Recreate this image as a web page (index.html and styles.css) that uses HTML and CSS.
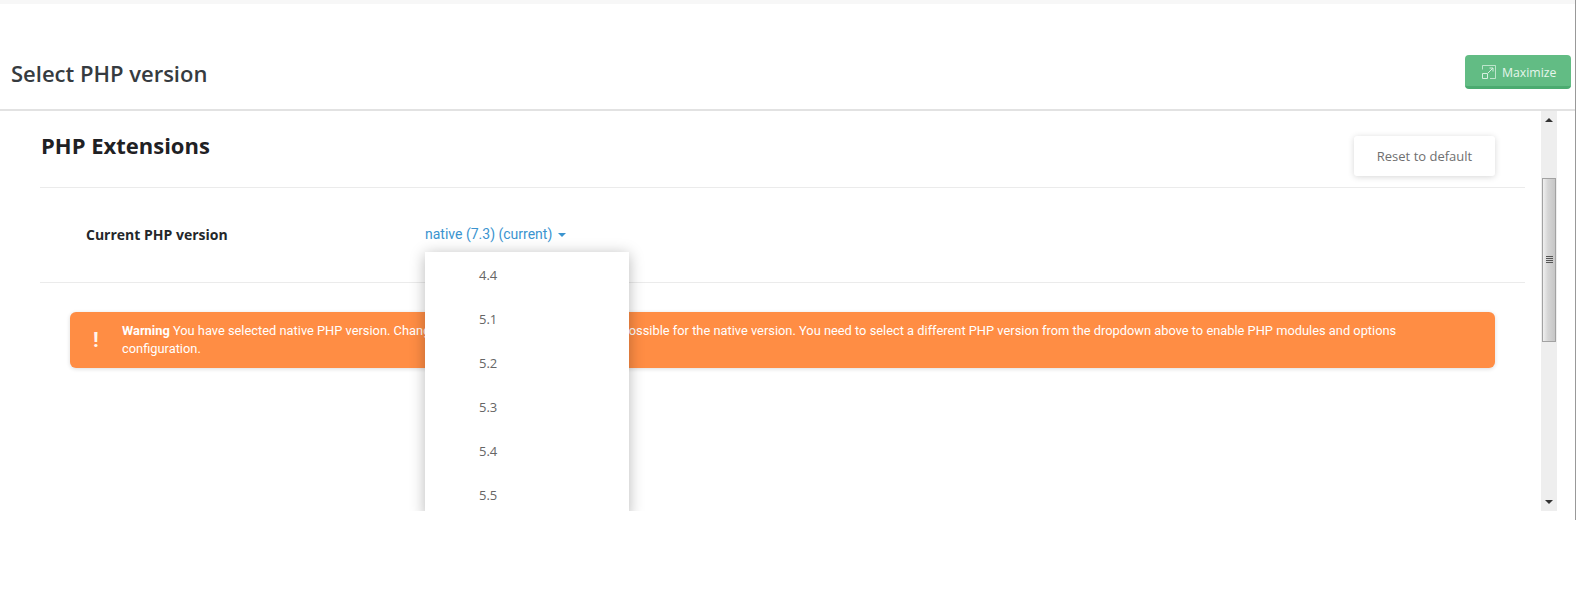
FILE: index.html
```html
<!DOCTYPE html>
<html lang="en">
<head>
<meta charset="utf-8">
<title>Select PHP version</title>
<link rel="stylesheet" href="styles.css">
</head>
<body>
<div class="window">
  <div class="topbar"></div>
  <header class="head">
    <h1 class="title">Select PHP version</h1>
    <button class="maximize" type="button">
      <svg class="max-icon" width="14" height="14" viewBox="0 0 14 14" fill="none" stroke="#d5efdf" stroke-width="1">
        <path d="M.5 4.500V.5H13.500V13.500H8" opacity=".8"/>
        <path d="M.5 8.500H5.500V13.500H.5Z"/>
        <path d="M6 8L11 3M7.500 3H11V6.500"/>
      </svg>
      <span>Maximize</span>
    </button>
  </header>
  <div class="body">
    <main class="pane">
      <div class="section-head">
        <h2 class="section-title">PHP Extensions</h2>
        <button class="reset" type="button">Reset to default</button>
      </div>
      <div class="version-row">
        <span class="version-label">Current PHP version</span>
        <span class="version-link">native (7.3) (current)<i class="caret"></i></span>
      </div>
      <div class="alert">
        <span class="alert-mark">!</span>
        <p class="alert-text"><b>Warning</b> You have selected native PHP version. Changing extensions and options is not possible for the native version. You need to select a different PHP version from the dropdown above to enable PHP modules and options configuration.</p>
      </div>
      <ul class="menu">
        <li>4.4</li>
        <li>5.1</li>
        <li>5.2</li>
        <li>5.3</li>
        <li>5.4</li>
        <li>5.5</li>
      </ul>
    </main>
    <div class="scrollbar">
      <i class="arrow-up"></i>
      <div class="thumb"><span class="grip"></span></div>
      <i class="arrow-down"></i>
    </div>
  </div>
</div>
</body>
</html>
```
FILE: styles.css
```css
html, body { margin: 0; padding: 0; background: #fff; }
body { height: 591px; overflow: hidden; font-family: "Open Sans", sans-serif; }
.window { width: 1575px; height: 520px; border-right: 1px solid #999; display: flex; flex-direction: column; }
.topbar { height: 4px; flex: none; background: #f7f7f7; }
.head { height: 107px; flex: none; box-sizing: border-box; border-bottom: 2px solid #e2e2e2; padding: 51px 4px 0 11px; display: flex; justify-content: space-between; align-items: flex-start; }
.title { margin: 2px 0 0; font-size: 22px; line-height: 32px; font-weight: 600; color: #363b40; }
.maximize { width: 106px; height: 34px; box-sizing: border-box; border: 0; border-bottom: 3px solid #4bab70; border-radius: 4px; background: #62bc84; color: #e6f6ec; font: 400 12.250px "Open Sans", sans-serif; display: flex; align-items: center; gap: 6px; padding: 3px 0 0 17px; }
.max-icon { flex: none; }
.body { height: 400px; display: flex; padding-right: 18px; }
.pane { position: relative; flex: 1; height: 400px; overflow: hidden; padding: 0 16px 0 40px; }
.section-head { height: 76px; border-bottom: 1px solid #ebebeb; display: flex; justify-content: space-between; align-items: flex-start; }
.section-title { margin: 19px 0 0 1px; font-size: 22px; line-height: 30px; font-weight: 700; color: #1f2124; }
.reset { width: 141px; height: 40px; margin: 25px 30px 0 0; border: 0; border-radius: 3px; background: #fff; color: #6f6f6f; font: 400 13px "Open Sans", sans-serif; box-shadow: 0 1px 6px rgba(0,0,0,.16); }
.version-row { height: 94px; border-bottom: 1px solid #ebebeb; display: flex; align-items: flex-start; padding: 0 0 0 46px; }
.version-label { width: 339px; margin-top: 37px; font-size: 14px; line-height: 20px; font-weight: 700; color: #24272a; }
.version-link { margin-top: 36px; font: 400 14px/20px Roboto, sans-serif; color: #3b94cf; }
.caret { display: inline-block; margin-left: 6px; vertical-align: 2px; border-top: 4px solid #3b94cf; border-left: 4px solid transparent; border-right: 4px solid transparent; }
.alert { margin: 29px 30px 0 30px; height: 56px; box-sizing: border-box; border-radius: 6px; background: #ff8d44; box-shadow: 0 1px 4px rgba(0,0,0,.14); padding: 10px 76px 0 23px; display: flex; color: #fff; }
.alert-mark { width: 29px; flex: none; font: 700 21px/37px Roboto, sans-serif; color: #fff5ec; }
.alert-text { margin: 0; font: 400 12.850px/18px Roboto, sans-serif; }
.alert-text b { font-weight: 700; }
.menu { position: absolute; left: 425px; top: 141px; width: 204px; margin: 0; padding: 1px 0 0; list-style: none; background: #fff; box-shadow: 0 2px 14px rgba(0,0,0,.28); }
.menu li { height: 44px; padding-left: 54px; font-size: 13px; line-height: 44px; color: #666; }
.scrollbar { width: 16px; flex: none; height: 400px; background: #eee; position: relative; display: flex; flex-direction: column; align-items: center; padding-top: 67px; box-sizing: border-box; }
.thumb { width: 14px; height: 164px; box-sizing: border-box; border: 1px solid #a2a2a2; background: linear-gradient(90deg, #f0f0f0, #d6d6d6 40%, #c6c6c6); display: flex; align-items: center; justify-content: center; }
.grip { width: 7px; height: 8px; background: repeating-linear-gradient(180deg, #555 0 1px, transparent 1px 2px); }
.arrow-up { position: absolute; top: 7px; left: 4px; border-bottom: 4px solid #333; border-left: 4px solid transparent; border-right: 4px solid transparent; }
.arrow-down { position: absolute; bottom: 7px; left: 4px; border-top: 4px solid #333; border-left: 4px solid transparent; border-right: 4px solid transparent; }
```
